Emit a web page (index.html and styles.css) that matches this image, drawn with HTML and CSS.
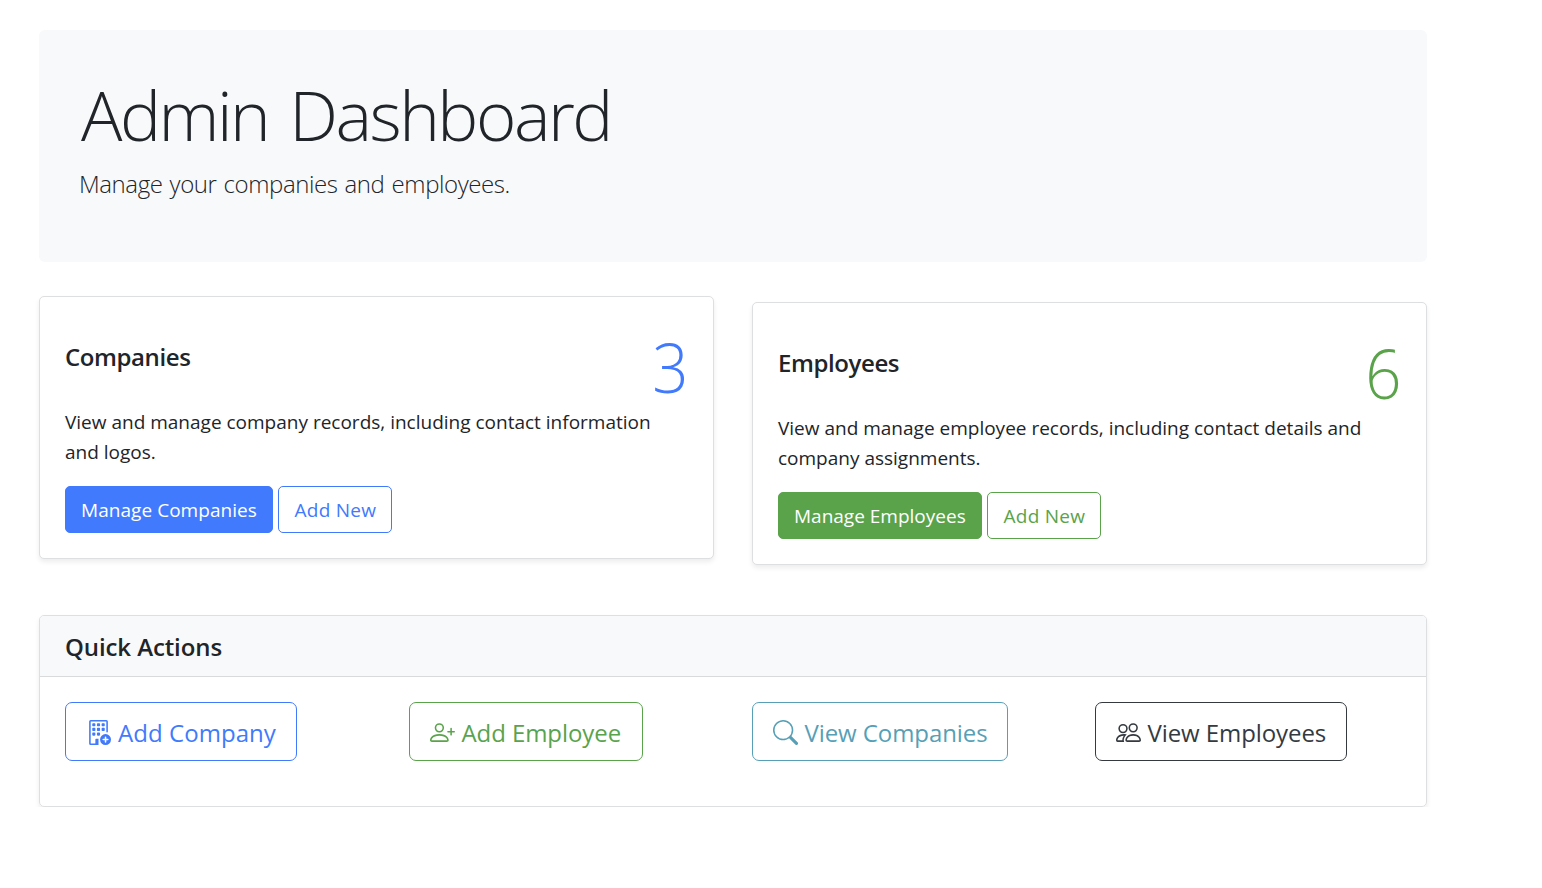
FILE: index.html
```html
<!DOCTYPE html>
<html lang="en">
<head>
<meta charset="utf-8">
<title>Admin Dashboard</title>
<link rel="stylesheet" href="styles.css">
</head>
<body>
<main class="container">
  <header class="hero">
    <h1 class="hero-title">Admin Dashboard</h1>
    <p class="lead">Manage your companies and employees.</p>
  </header>
  <section class="cards">
    <article class="card card-raised">
      <div class="card-top">
        <h2 class="card-title">Companies</h2>
        <span class="count blue">3</span>
      </div>
      <p class="card-text">View and manage company records, including contact information<br>and logos.</p>
      <div class="card-actions">
        <a class="btn btn-primary w-companies"><span>Manage Companies</span></a>
        <a class="btn outline blue w-new"><span>Add New</span></a>
      </div>
    </article>
    <article class="card">
      <div class="card-top">
        <h2 class="card-title">Employees</h2>
        <span class="count green">6</span>
      </div>
      <p class="card-text">View and manage employee records, including contact details and<br>company assignments.</p>
      <div class="card-actions">
        <a class="btn btn-success w-employees"><span>Manage Employees</span></a>
        <a class="btn outline green w-new"><span>Add New</span></a>
      </div>
    </article>
  </section>
  <section class="quick">
    <div class="quick-header"><h2 class="quick-title">Quick Actions</h2></div>
    <div class="quick-body">
      <div><a class="btn-lg blue w-add-company">
        <svg class="icon" viewBox="0 0 16 16"><path d="M2 1a1 1 0 0 1 1-1h10a1 1 0 0 1 1 1v6.5a.5.5 0 0 1-1 0V1H3v14h3v-2.5a.5.5 0 0 1 .5-.5H8v4H3a1 1 0 0 1-1-1z"/><path d="M4.500 2h1a.5.5 0 0 1 .5.5v1a.5.5 0 0 1-.5.5h-1a.5.5 0 0 1-.5-.5v-1a.5.5 0 0 1 .5-.5m3 0h1a.5.5 0 0 1 .5.5v1a.5.5 0 0 1-.5.5h-1a.5.5 0 0 1-.5-.5v-1a.5.5 0 0 1 .5-.5m3 0h1a.5.5 0 0 1 .5.5v1a.5.5 0 0 1-.5.5h-1a.5.5 0 0 1-.5-.5v-1a.5.5 0 0 1 .5-.5m-6 3h1a.5.5 0 0 1 .5.5v1a.5.5 0 0 1-.5.5h-1a.5.5 0 0 1-.5-.5v-1a.5.5 0 0 1 .5-.5m3 0h1a.5.5 0 0 1 .5.5v1a.5.5 0 0 1-.5.5h-1a.5.5 0 0 1-.5-.5v-1a.5.5 0 0 1 .5-.5m3 0h1a.5.5 0 0 1 .5.5v1a.5.5 0 0 1-.5.5h-1a.5.5 0 0 1-.5-.5v-1a.5.5 0 0 1 .5-.5m-6 3h1a.5.5 0 0 1 .5.5v1a.5.5 0 0 1-.5.5h-1a.5.5 0 0 1-.5-.5v-1a.5.5 0 0 1 .5-.5m3 0h1a.5.5 0 0 1 .5.5v1a.5.5 0 0 1-.5.5h-1a.5.5 0 0 1-.5-.5v-1a.5.5 0 0 1 .5-.5"/><path d="M12.500 16a3.500 3.500 0 1 0 0-7 3.500 3.500 0 0 0 0 7m.5-5v1h1a.5.5 0 0 1 0 1h-1v1a.5.5 0 0 1-1 0v-1h-1a.5.5 0 0 1 0-1h1v-1a.5.5 0 0 1 1 0"/></svg>
        <span class="label label-wide">Add Company</span></a></div>
      <div><a class="btn-lg green w-add-employee">
        <svg class="icon" viewBox="0 0 16 16"><path d="M6 8a3 3 0 1 0 0-6 3 3 0 0 0 0 6m2-3a2 2 0 1 1-4 0 2 2 0 0 1 4 0m4 8c0 1-1 1-1 1H1s-1 0-1-1 1-4 6-4 6 3 6 4m-1-.004c-.001-.246-.154-.986-.832-1.664C9.516 10.680 8.289 10 6 10s-3.516.68-4.168 1.332c-.678.678-.83 1.418-.832 1.664z"/><path d="M13.500 5a.5.5 0 0 1 .5.5V7h1.500a.5.5 0 0 1 0 1H14v1.500a.5.5 0 0 1-1 0V8h-1.500a.5.5 0 0 1 0-1H13V5.500a.5.5 0 0 1 .5-.5"/></svg>
        <span class="label">Add Employee</span></a></div>
      <div><a class="btn-lg teal w-view-companies">
        <svg class="icon" viewBox="0 0 16 16"><path d="M11.742 10.344a6.500 6.500 0 1 0-1.397 1.398h-.001q.044.06.098.115l3.850 3.850a1 1 0 0 0 1.415-1.414l-3.850-3.850a1 1 0 0 0-.115-.1zM12 6.500a5.500 5.500 0 1 1-11 0 5.500 5.500 0 0 1 11 0"/></svg>
        <span class="label">View Companies</span></a></div>
      <div><a class="btn-lg dark w-view-employees">
        <svg class="icon" viewBox="0 0 16 16"><path d="M15 14s1 0 1-1-1-4-5-4-5 3-5 4 1 1 1 1zm-7.978-1L7 12.996c.001-.264.167-1.030.76-1.720C8.312 10.629 9.282 10 11 10c1.717 0 2.687.63 3.240 1.276.593.69.758 1.457.76 1.720l-.008.002-.014.002zM11 7a2 2 0 1 0 0-4 2 2 0 0 0 0 4m3-2a3 3 0 1 1-6 0 3 3 0 0 1 6 0M6.936 9.280a6 6 0 0 0-1.230-.247A7 7 0 0 0 5 9c-4 0-5 3-5 4q0 1 1 1h4.216A2.240 2.240 0 0 1 5 13c0-1.010.377-2.042 1.090-2.904.243-.294.526-.569.846-.816M4.920 10A5.500 5.500 0 0 0 4 13H1c0-.26.164-1.030.76-1.724.545-.636 1.492-1.256 3.160-1.275ZM1.500 5.500a3 3 0 1 1 6 0 3 3 0 0 1-6 0m3-2a2 2 0 1 0 0 4 2 2 0 0 0 0-4"/></svg>
        <span class="label">View Employees</span></a></div>
    </div>
  </section>
</main>
</body>
</html>
```
FILE: styles.css
```css
* { box-sizing: border-box; }
body {
  margin: 0;
  background: #fff;
  color: #212529;
  font-family: "Open Sans", "Noto Sans", sans-serif;
  font-size: 19px;
  line-height: 30px;
}
h1, h2, p { margin: 0; white-space: nowrap; }
.container { width: 1388px; margin: 30px 0 0 39px; }
.hero { height: 232px; padding: 42px 40px; background: #f8f9fb; border-radius: 6px; }
.hero-title { padding-left: 2px; font-size: 69px; font-weight: 300; line-height: 84px; letter-spacing: -2.5px; word-spacing: 5.5px; }
.lead { margin-top: 9px; font-size: 24px; font-weight: 300; line-height: 38px; letter-spacing: -0.42px; word-spacing: 1.3px; }
.cards { display: grid; grid-template-columns: 675px 675px; gap: 38px; margin-top: 40px; }
.card {
  height: 263px;
  padding: 25px;
  background: #fff;
  border: 1px solid #dedfe0;
  border-radius: 5px;
  box-shadow: 0 3px 5px rgba(0, 0, 0, .075);
}
.card-raised { transform: translateY(-6px); }
.card-top { display: flex; justify-content: space-between; height: 85px; }
.card-title { margin-top: 20px; font-size: 24px; font-weight: 600; line-height: 30px; letter-spacing: -0.4px; }
.count { padding-top: 3px; font-size: 69px; font-weight: 300; line-height: 82px; transform: scaleX(.92); transform-origin: right; }
.card-actions { display: flex; gap: 5px; margin-top: 19px; }
.btn {
  display: flex;
  align-items: center;
  height: 47px;
  padding-left: 15px;
  border: 1px solid;
  border-radius: 5px;
  white-space: nowrap;
}
.btn-primary { background: #417afc; border-color: #417afc; color: #fff; }
.btn-success { background: #5aa34b; border-color: #5aa34b; color: #fff; }
.blue { color: #417afc; }
.green { color: #5aa34b; }
.teal { color: #579fb7; }
.dark { color: #343a40; }
.w-companies { width: 208px; letter-spacing: 0.05px; }
.w-employees { width: 204px; }
.w-new { width: 114px; padding-left: 15.5px; letter-spacing: 0.25px; }
.quick {
  height: 192px;
  margin-top: 50px;
  border: 1px solid #dedfe0;
  border-radius: 5px;
  box-shadow: 0 3px 5px rgba(0, 0, 0, .075);
}
.quick-header { height: 61px; padding: 16px 25px 0; background: #f8f9fb; border-bottom: 1px solid #d9dadb; border-radius: 4px 4px 0 0; }
.quick-title { font-size: 24px; font-weight: 600; line-height: 30px; letter-spacing: -0.1px; }
.quick-body { display: grid; grid-template-columns: 306px 305px 305px 252px; column-gap: 38px; padding: 25px 25px 0; }
.btn-lg {
  display: flex;
  align-items: center;
  gap: 7px;
  height: 59px;
  padding: 1px 0 0 19.5px;
  border: 1px solid;
  border-radius: 7px;
  font-size: 24px;
  white-space: nowrap;
}
.label { padding-top: 1px; letter-spacing: -0.08px; }
.label-wide { letter-spacing: 0.05px; }
.icon { width: 25px; height: 25px; flex: none; fill: currentColor; }
.w-add-company { width: 232px; padding-left: 20px; }
.w-add-employee { width: 234px; }
.w-view-companies { width: 256px; }
.w-view-employees { width: 252px; }
```
